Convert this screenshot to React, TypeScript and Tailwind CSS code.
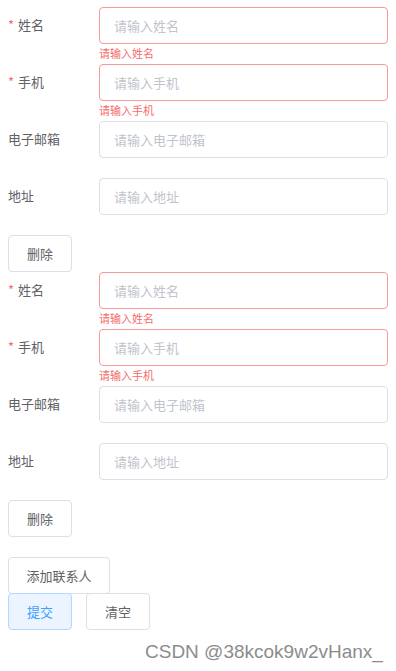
import React from "react";

type Field = { label: string; required: boolean; error?: string };

const fields: Field[] = [
    { label: "姓名", required: true, error: "请输入姓名" },
    { label: "手机", required: true, error: "请输入手机" },
    { label: "电子邮箱", required: false },
    { label: "地址", required: false },
];

const FormRow: React.FC<{ field: Field }> = ({ field }) => {
    return (
        <div className="relative flex items-center h-[36px] mb-[21px]">
            <label className="w-[91px] shrink-0 text-[13px] text-[#606266]">
                {field.required ? <span className="text-[#f56c6c] mr-[4px]">*</span> : null}
                {field.label}
            </label>
            <input
                placeholder={"请输入" + field.label}
                className={
                    "w-[289px] h-[37px] rounded-[4px] border px-[14px] text-[13px] outline-none placeholder:text-[#c0c4cc] " +
                    (field.error ? "border-[#f89898]" : "border-[#dcdfe6]")
                }
            />
            {field.error ? (
                <div className="absolute left-[91px] top-[38px] text-[11px] leading-[16px] text-[#f56c6c]">{field.error}</div>
            ) : null}
        </div>
    );
};

const Btn: React.FC<{ children: React.ReactNode; className?: string }> = ({ children, className }) => (
    <button
        className={
            "h-[37px] rounded-[4px] border text-[13px] " +
            (className ?? "border-[#dcdfe6] bg-white text-[#606266]")
        }
    >
        {children}
    </button>
);

export default function App() {
    return (
        <div
            className="relative w-[396px] h-[671px] bg-white pl-[8px] pt-[7px]"
            style={{ fontFamily: '"Noto Sans CJK SC", "Noto Sans", sans-serif' }}
        >
            {[0, 1].map((block) => (
                <div key={block}>
                    {fields.map((f) => (
                        <FormRow key={f.label} field={f} />
                    ))}
                    <Btn className="w-[64px] border-[#dcdfe6] bg-white text-[#606266]">删除</Btn>
                </div>
            ))}
            <div className="mt-[20px]">
                <Btn className="w-[102px] border-[#dcdfe6] bg-white text-[#606266]">添加联系人</Btn>
            </div>
            <div className="flex gap-[14px] -mt-[1px]">
                <Btn className="w-[64px] border-[#b3d8ff] bg-[#ecf5ff] text-[#409eff]">提交</Btn>
                <Btn className="w-[64px] border-[#dcdfe6] bg-white text-[#606266]">清空</Btn>
            </div>
            <div
                className="absolute left-[145px] top-[640px] text-[19px] leading-[24px] text-[#8c8c8c]"
                style={{ fontFamily: '"Liberation Sans", Arial, sans-serif' }}
            >
                CSDN @38kcok9w2vHanx_
            </div>
        </div>
    );
}
